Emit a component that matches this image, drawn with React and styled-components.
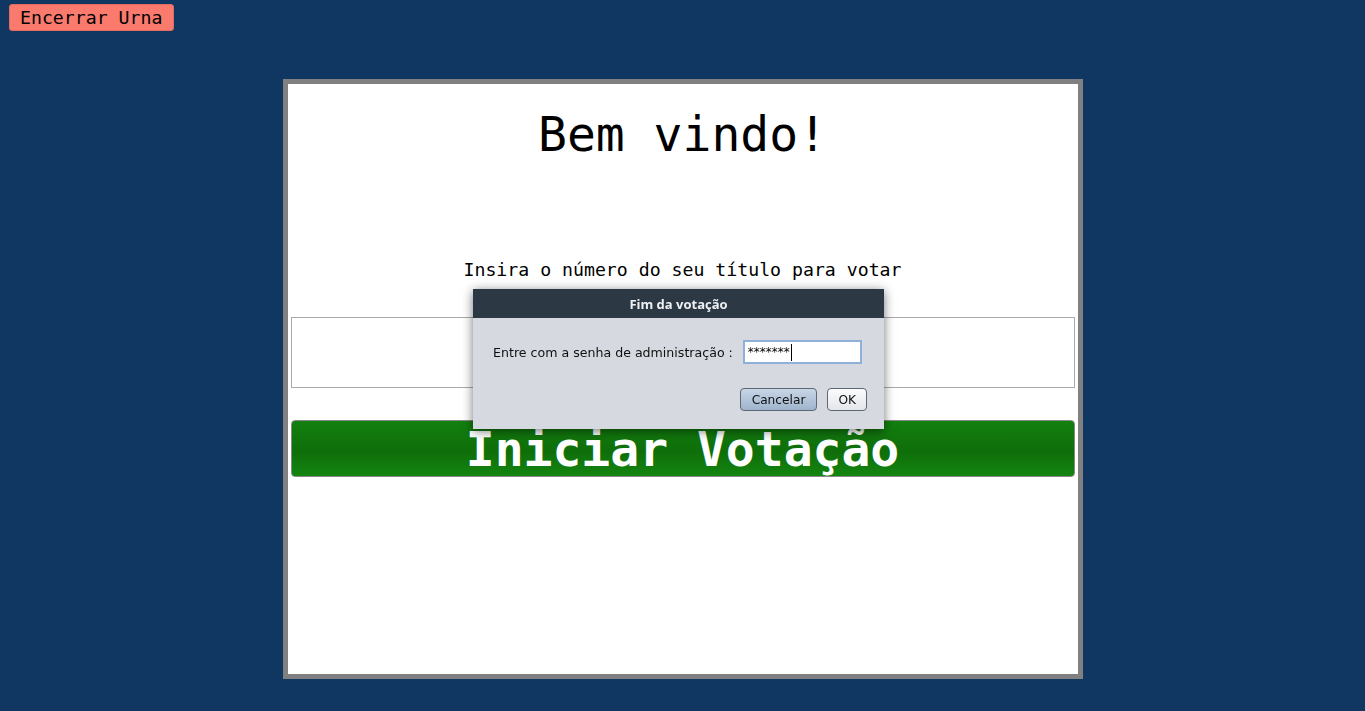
import React from 'react';
import styled, { createGlobalStyle } from 'styled-components';

const GlobalStyle = createGlobalStyle`
  html, body {
    margin: 0;
    padding: 0;
    background: #0f3761;
    height: 100%;
  }
  body {
    font-family: "DejaVu Sans Mono", monospace;
  }
`

const Page = styled.div`
  min-height: 711px;
  padding: 4px 9px 0;
  box-sizing: border-box;
`

const TopButton = styled.button`
  display: block;
  height: 27px;
  padding: 0 11px 0 10px;
  background: #fa7b6e;
  border: 1px solid #e36a5e;
  border-radius: 3px;
  font-family: "DejaVu Sans Mono", monospace;
  font-size: 18.2px;
  color: #000;
`

const Panel = styled.div`
  width: 800px;
  height: 600px;
  box-sizing: border-box;
  margin: 48px auto 0;
  border: 5px solid #808080;
  background: #fff;
  padding: 0 3px;
  display: flex;
  flex-direction: column;
`

const Title = styled.h1`
  margin: 20px 0 0;
  font-weight: normal;
  font-size: 48px;
  line-height: 60px;
  text-align: center;
`

const Prompt = styled.p`
  margin: 95px 0 0;
  font-size: 18.2px;
  line-height: 22px;
  text-align: center;
`

const BigInput = styled.div`
  margin-top: 36px;
  height: 71px;
  box-sizing: border-box;
  border: 1px solid #aaa;
`

const StartButton = styled.button`
  margin-top: 32px;
  height: 57px;
  border: 1px solid #888;
  border-radius: 4px;
  background: linear-gradient(#13800f, #0f6e0a 55%, #138510);
  color: #fff;
  font-family: "DejaVu Sans Mono", monospace;
  font-weight: bold;
  font-size: 48px;
  line-height: 50px;
  padding: 0;
`

const Dialog = styled.div`
  position: fixed;
  left: 473px;
  top: 289px;
  width: 411px;
  height: 140px;
  background: #d6d9e0;
  box-shadow: 0 2px 10px rgba(0, 0, 0, 0.55);
  font-family: "DejaVu Sans", sans-serif;
  font-size: 12.6px;
  display: flex;
  flex-direction: column;
`

const DialogHead = styled.div`
  height: 29px;
  background: #2c3843;
  color: #eef0f2;
  font-family: "Open Sans", sans-serif;
  font-weight: bold;
  font-size: 13px;
  display: flex;
  align-items: center;
  justify-content: center;
`

const DialogRow = styled.div`
  display: flex;
  align-items: center;
  padding: 0 ${p => (p.end ? 17 : 22)}px 0 20px;
  margin-top: ${p => p.top}px;
  justify-content: ${p => (p.end ? 'flex-end' : 'flex-start')};
  gap: ${p => p.gap || 0}px;
`

const Label = styled.span`
  color: #111;
  margin-right: 10px;
`

const Password = styled.div`
  width: 119px;
  height: 24px;
  box-sizing: border-box;
  border: 2px solid #8fb0d8;
  background: #fff;
  display: flex;
  align-items: center;
  padding-left: 3px;
  font-size: 12px;
  color: #000;
`

const Caret = styled.span`
  display: inline-block;
  width: 1px;
  height: 17px;
  background: #000;
  margin-left: 1px;
`

const DlgButton = styled.button`
  height: 23px;
  padding: 0 ${p => (p.primary ? 11 : 10)}px;
  border: 1px solid #5d6877;
  border-radius: 4px;
  background: ${p => (p.primary ? 'linear-gradient(#c7d6e6, #9fb4cc)' : 'linear-gradient(#fcfcfd, #e3e6ea)')};
  font-family: "DejaVu Sans", sans-serif;
  font-size: 12.2px;
  color: #111;
`

export default function App() {
  return (
    <>
      <GlobalStyle />
      <Page>
        <TopButton>Encerrar Urna</TopButton>
        <Panel>
          <Title>Bem vindo!</Title>
          <Prompt>Insira o número do seu título para votar</Prompt>
          <BigInput />
          <StartButton>Iniciar Votação</StartButton>
        </Panel>
      </Page>
      <Dialog>
        <DialogHead>Fim da votação</DialogHead>
        <DialogRow top={22}>
          <Label>Entre com a senha de administração :</Label>
          <Password>*******<Caret /></Password>
        </DialogRow>
        <DialogRow top={24} end gap={10}>
          <DlgButton primary>Cancelar</DlgButton>
          <DlgButton>OK</DlgButton>
        </DialogRow>
      </Dialog>
    </>
  );
}
